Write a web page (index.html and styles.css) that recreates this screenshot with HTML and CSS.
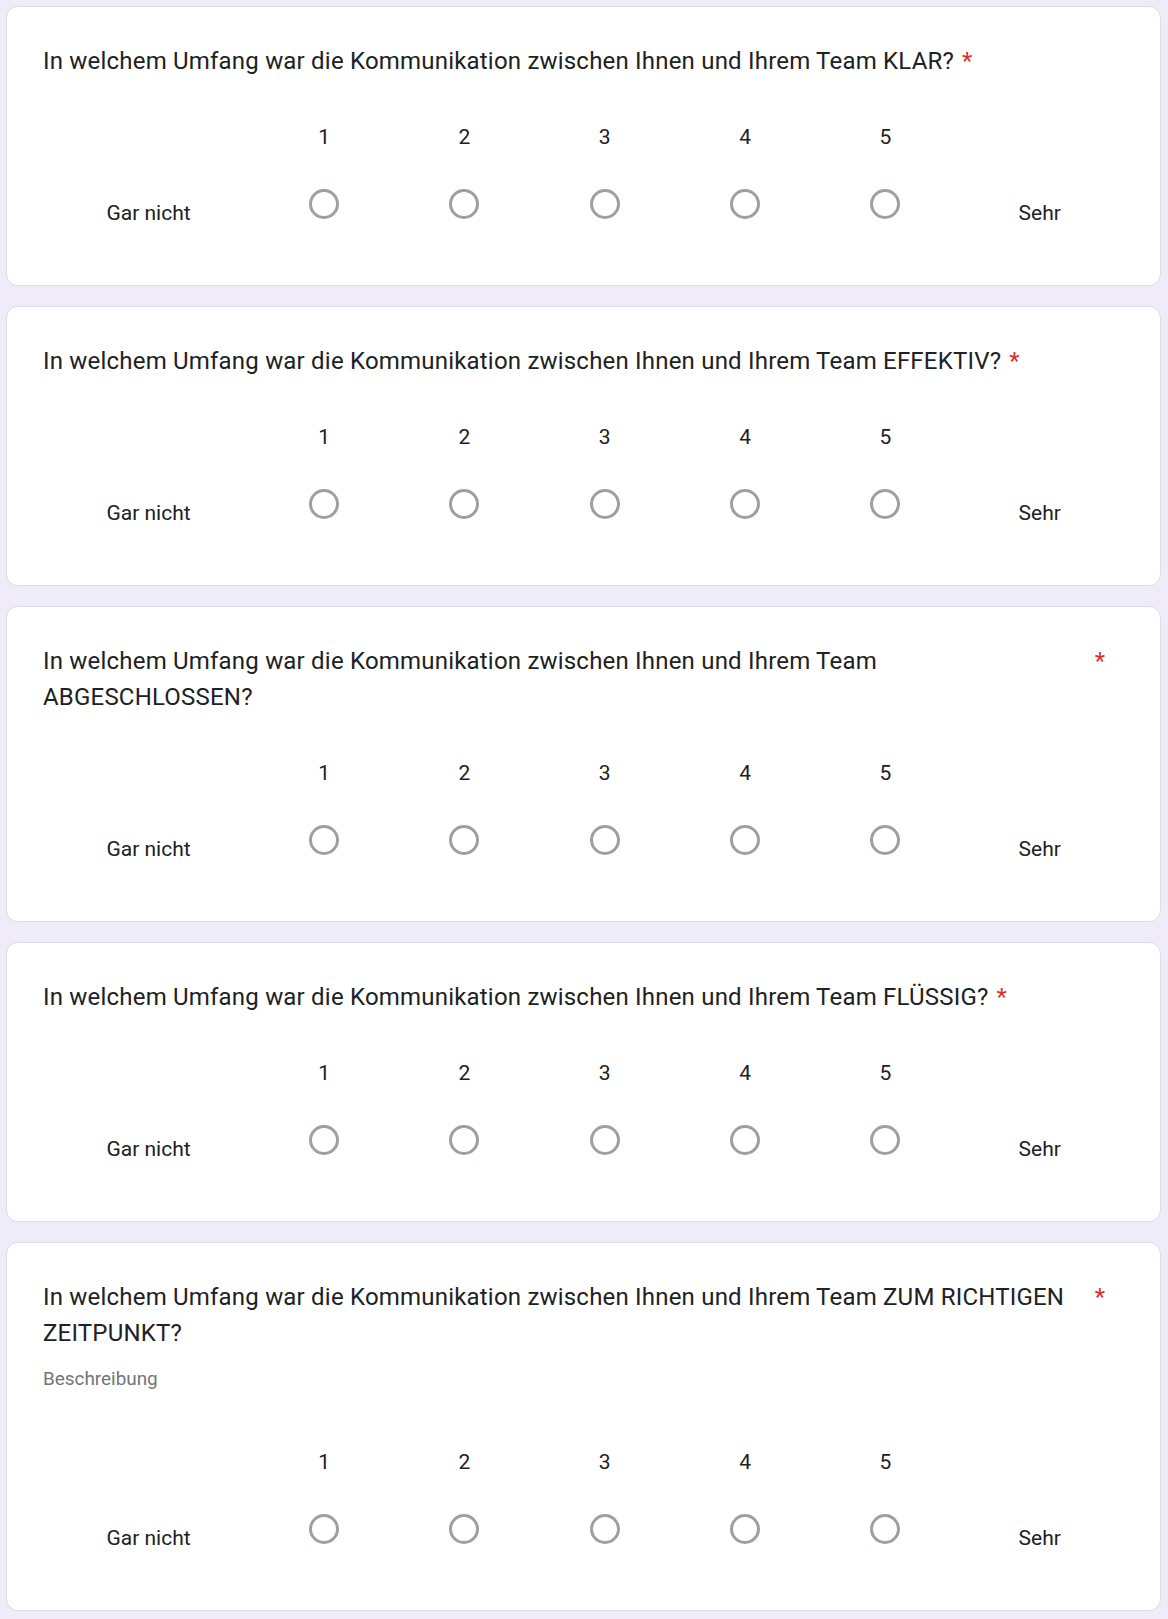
FILE: index.html
```html
<!DOCTYPE html>
<html lang="de">
<head>
<meta charset="utf-8">
<title>Formular</title>
<link rel="stylesheet" href="styles.css">
</head>
<body>
<main class="form">

  <section class="card">
    <div class="q-head">
      <div class="q-title">In welchem Umfang war die Kommunikation zwischen Ihnen und Ihrem Team KLAR?</div>
      <span class="req">*</span>
    </div>
    <div class="scale">
      <div class="end-label">Gar nicht</div>
      <div class="opt"><div class="num">1</div><span class="radio"></span></div>
      <div class="opt"><div class="num">2</div><span class="radio"></span></div>
      <div class="opt"><div class="num">3</div><span class="radio"></span></div>
      <div class="opt"><div class="num">4</div><span class="radio"></span></div>
      <div class="opt"><div class="num">5</div><span class="radio"></span></div>
      <div class="end-label">Sehr</div>
    </div>
  </section>

  <section class="card">
    <div class="q-head">
      <div class="q-title">In welchem Umfang war die Kommunikation zwischen Ihnen und Ihrem Team EFFEKTIV?</div>
      <span class="req">*</span>
    </div>
    <div class="scale">
      <div class="end-label">Gar nicht</div>
      <div class="opt"><div class="num">1</div><span class="radio"></span></div>
      <div class="opt"><div class="num">2</div><span class="radio"></span></div>
      <div class="opt"><div class="num">3</div><span class="radio"></span></div>
      <div class="opt"><div class="num">4</div><span class="radio"></span></div>
      <div class="opt"><div class="num">5</div><span class="radio"></span></div>
      <div class="end-label">Sehr</div>
    </div>
  </section>

  <section class="card">
    <div class="q-head">
      <div class="q-title">In welchem Umfang war die Kommunikation zwischen Ihnen und Ihrem Team ABGESCHLOSSEN?</div>
      <span class="req">*</span>
    </div>
    <div class="scale">
      <div class="end-label">Gar nicht</div>
      <div class="opt"><div class="num">1</div><span class="radio"></span></div>
      <div class="opt"><div class="num">2</div><span class="radio"></span></div>
      <div class="opt"><div class="num">3</div><span class="radio"></span></div>
      <div class="opt"><div class="num">4</div><span class="radio"></span></div>
      <div class="opt"><div class="num">5</div><span class="radio"></span></div>
      <div class="end-label">Sehr</div>
    </div>
  </section>

  <section class="card">
    <div class="q-head">
      <div class="q-title">In welchem Umfang war die Kommunikation zwischen Ihnen und Ihrem Team FLÜSSIG?</div>
      <span class="req">*</span>
    </div>
    <div class="scale">
      <div class="end-label">Gar nicht</div>
      <div class="opt"><div class="num">1</div><span class="radio"></span></div>
      <div class="opt"><div class="num">2</div><span class="radio"></span></div>
      <div class="opt"><div class="num">3</div><span class="radio"></span></div>
      <div class="opt"><div class="num">4</div><span class="radio"></span></div>
      <div class="opt"><div class="num">5</div><span class="radio"></span></div>
      <div class="end-label">Sehr</div>
    </div>
  </section>

  <section class="card">
    <div class="q-head">
      <div class="q-title">In welchem Umfang war die Kommunikation zwischen Ihnen und Ihrem Team ZUM RICHTIGEN ZEITPUNKT?</div>
      <span class="req">*</span>
    </div>
    <div class="q-desc">Beschreibung</div>
    <div class="scale">
      <div class="end-label">Gar nicht</div>
      <div class="opt"><div class="num">1</div><span class="radio"></span></div>
      <div class="opt"><div class="num">2</div><span class="radio"></span></div>
      <div class="opt"><div class="num">3</div><span class="radio"></span></div>
      <div class="opt"><div class="num">4</div><span class="radio"></span></div>
      <div class="opt"><div class="num">5</div><span class="radio"></span></div>
      <div class="end-label">Sehr</div>
    </div>
  </section>

</main>
</body>
</html>
```
FILE: styles.css
```css
html, body {
  margin: 0;
  padding: 0;
  background: #f0ebf8;
}

body {
  font-family: Roboto, "Liberation Sans", Arial, sans-serif;
  color: #202124;
}

.form {
  display: flex;
  flex-direction: column;
  gap: 20px;
  padding: 6px 7px 0 6px;
}

.card {
  display: flex;
  flex-direction: column;
  background: #ffffff;
  border: 1px solid #dadce0;
  border-radius: 12px;
  padding: 36px;
}

.q-head {
  display: flex;
  align-items: flex-start;
  padding-right: 19px;
}

.q-title {
  flex: 0 1 auto;
  font-size: 24px;
  line-height: 36px;
  letter-spacing: 0.2px;
  color: #202124;
}

.req {
  flex: 0 0 auto;
  padding-left: 8px;
  font-size: 24px;
  line-height: 36px;
  color: #d93025;
}

.q-desc {
  margin: 14px 0 12px;
  font-size: 18.9px;
  line-height: 27px;
  color: #70757a;
}

.scale {
  margin-top: 43px;
  display: grid;
  grid-template-columns: 211fr repeat(5, 140.3fr) 168.5fr;
}

.end-label {
  align-self: end;
  margin-bottom: 21px;
  font-size: 21px;
  line-height: 30px;
  text-align: center;
  color: #202124;
}

.opt {
  display: flex;
  flex-direction: column;
  align-items: center;
}

.num {
  font-size: 21px;
  line-height: 30px;
  color: #202124;
}

.radio {
  display: block;
  box-sizing: border-box;
  width: 30px;
  height: 30px;
  margin: 37px 0 30px;
  border: 3px solid #9aa0a6;
  border-radius: 50%;
}
```
